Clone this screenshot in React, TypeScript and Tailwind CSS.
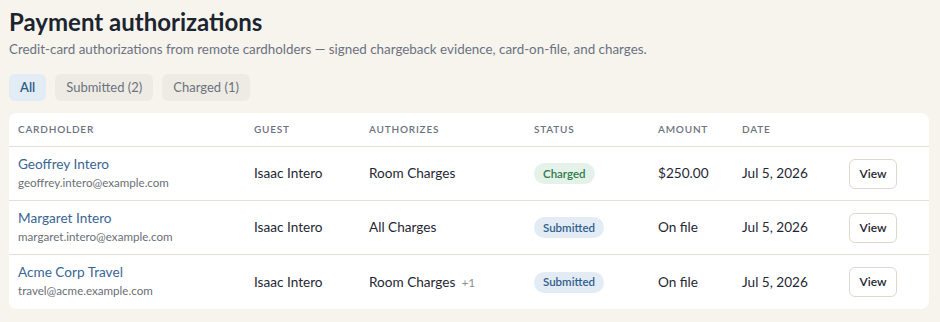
import { ReactNode } from "react";

type Row = {
  name: string;
  email: string;
  guest: string;
  authorizes: string;
  extra?: string;
  status: "Charged" | "Submitted";
  amount: string;
  date: string;
};

const rows: Row[] = [
  {
    name: "Geoffrey Intero",
    email: "geoffrey.intero@example.com",
    guest: "Isaac Intero",
    authorizes: "Room Charges",
    status: "Charged",
    amount: "$250.00",
    date: "Jul 5, 2026",
  },
  {
    name: "Margaret Intero",
    email: "margaret.intero@example.com",
    guest: "Isaac Intero",
    authorizes: "All Charges",
    status: "Submitted",
    amount: "On file",
    date: "Jul 5, 2026",
  },
  {
    name: "Acme Corp Travel",
    email: "travel@acme.example.com",
    guest: "Isaac Intero",
    authorizes: "Room Charges",
    extra: "+1",
    status: "Submitted",
    amount: "On file",
    date: "Jul 5, 2026",
  },
];

const cols = "grid grid-cols-[236px_115px_165px_124px_84px_107px_1fr] items-center";

const StatusBadge = ({ status }: { status: Row["status"] }) => {
  const tone =
    status === "Charged"
      ? "bg-[#e5f2e9] text-[#2e7a4c]"
      : "bg-[#e3ecf5] text-[#2f5f8c]";
  return (
    <span
      className={`inline-flex h-[21px] items-center rounded-full px-[9px] text-[11.5px] font-semibold ${tone}`}
    >
      {status}
    </span>
  );
};

const Tab = ({ active, children }: { active?: boolean; children: ReactNode }) => (
  <button
    className={`h-[27px] rounded-md px-[11px] text-[13px] ${
      active
        ? "bg-[#e2ecf5] font-semibold text-[#2d5b88]"
        : "bg-[#eeebe4] text-[#6b7280]"
    }`}
  >
    {children}
  </button>
);

export default function App() {
  return (
    <div
      className="min-h-[322px] bg-[#f7f4ee] px-[9px] pt-[6px] text-[#1f2733]"
      style={{ fontFamily: "Lato, 'Noto Sans', sans-serif" }}
    >
      <h1 className="text-[24px] font-bold leading-[32px] text-[#1c2430]">
        Payment authorizations
      </h1>
      <p className="mt-[1px] text-[13.4px] leading-[20px] text-[#6b7280]">
        Credit-card authorizations from remote cardholders — signed chargeback
        evidence, card-on-file, and charges.
      </p>

      <div className="mt-[15px] flex gap-[9px]">
        <Tab active>All</Tab>
        <Tab>Submitted (2)</Tab>
        <Tab>Charged (1)</Tab>
      </div>

      <div className="mt-[12px] w-[920px] overflow-hidden rounded-lg bg-white">
        <div
          className={`${cols} h-[34px] border-b border-[#e4e0d8] pl-[9px] text-[10px] font-semibold uppercase tracking-[0.08em] text-[#6b7280]`}
        >
          <span>Cardholder</span>
          <span>Guest</span>
          <span>Authorizes</span>
          <span>Status</span>
          <span>Amount</span>
          <span>Date</span>
          <span />
        </div>
        {rows.map((r, i) => (
          <div
            key={r.email}
            className={`${cols} h-[54px] pl-[9px] text-[13.6px] ${
              i < rows.length - 1 ? "border-b border-[#e4e0d8]" : ""
            }`}
          >
            <div className="-mt-[2px] flex flex-col">
              <span className="leading-[19px] text-[#3a6594]">{r.name}</span>
              <span className="text-[11.6px] leading-[17px] text-[#6b6f76]">
                {r.email}
              </span>
            </div>
            <span>{r.guest}</span>
            <span>
              {r.authorizes}
              {r.extra && (
                <span className="ml-[6px] text-[12px] text-[#8a8f96]">{r.extra}</span>
              )}
            </span>
            <span>
              <StatusBadge status={r.status} />
            </span>
            <span>{r.amount}</span>
            <span>{r.date}</span>
            <span>
              <button className="h-[30px] w-[48px] rounded-md border border-[#dcd8cc] bg-white text-[12px] font-semibold text-[#1f2733]">
                View
              </button>
            </span>
          </div>
        ))}
      </div>
    </div>
  );
}
